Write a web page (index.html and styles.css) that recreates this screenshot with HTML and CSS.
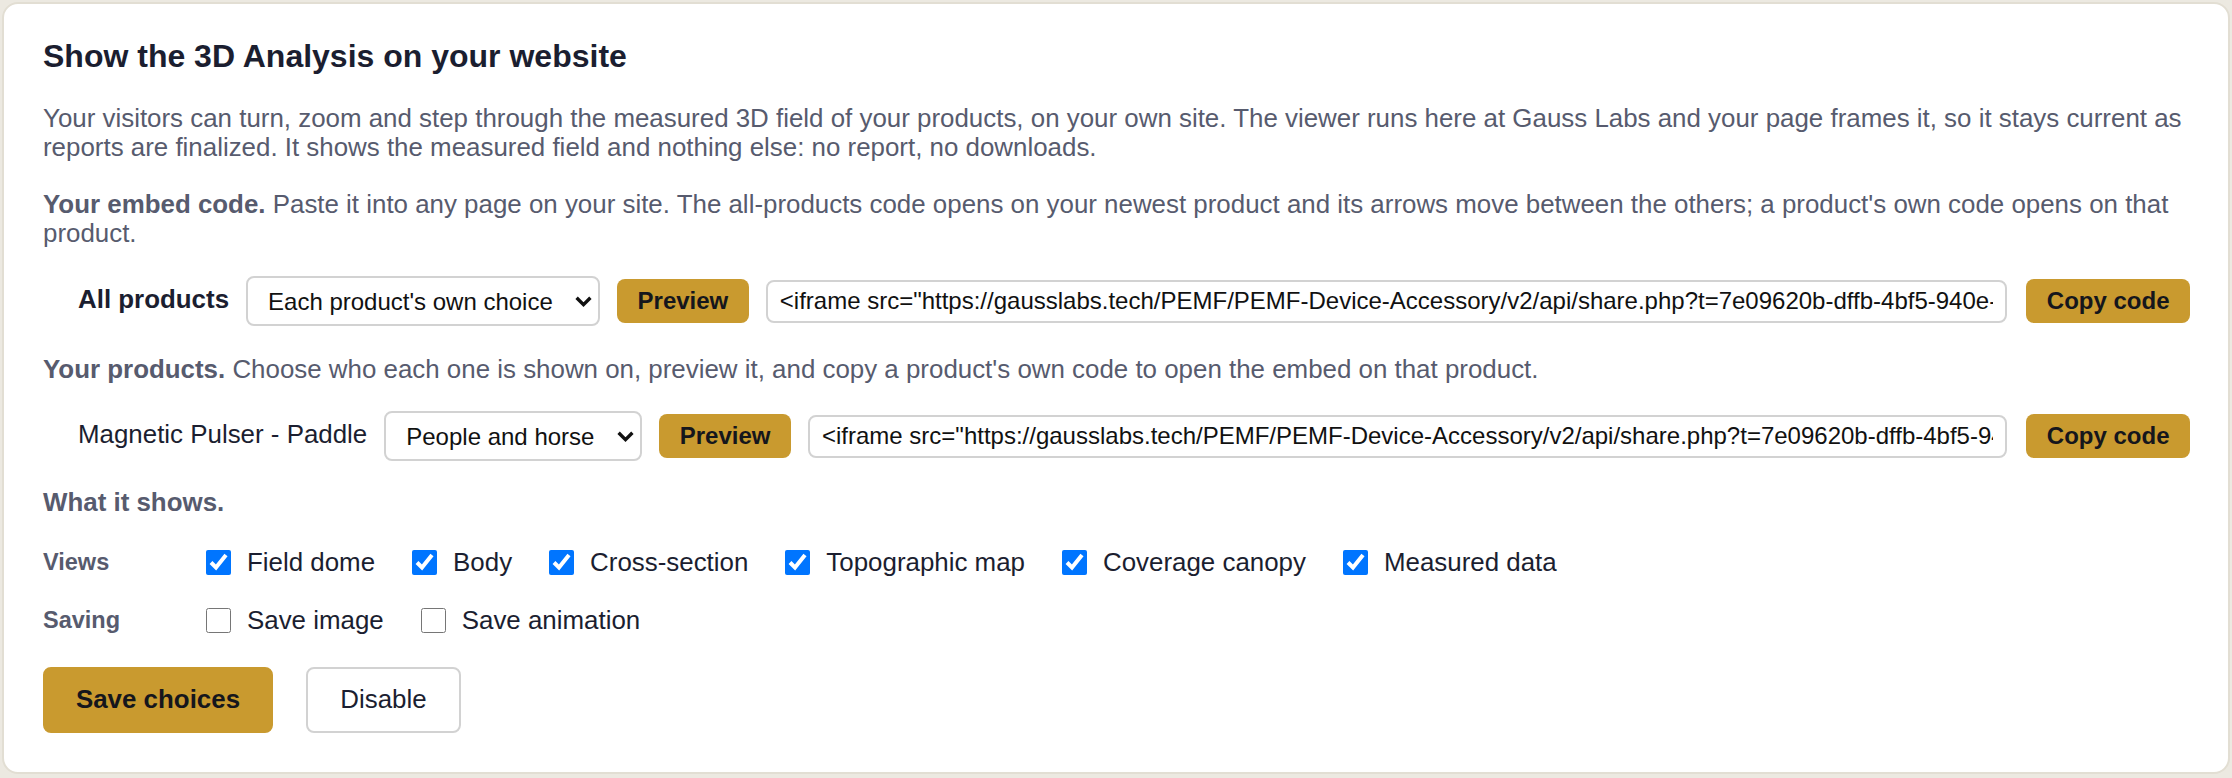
FILE: index.html
```html
<!DOCTYPE html>
<html lang="en">
<head>
<meta charset="utf-8">
<title>Show the 3D Analysis on your website</title>
<link rel="stylesheet" href="styles.css">
</head>
<body>
<section class="card">
  <h2 class="title">Show the 3D Analysis on your website</h2>
  <p class="text intro">Your visitors can turn, zoom and step through the measured 3D field of your products, on your own site. The viewer runs here at Gauss Labs and your page frames it, so it stays current as reports are finalized. It shows the measured field and nothing else: no report, no downloads.</p>
  <p class="text embed"><strong>Your embed code.</strong> Paste it into any page on your site. The all-products code opens on your newest product and its arrows move between the others; a product's own code opens on that product.</p>

  <div class="code-row first">
    <span class="row-label strong">All products</span>
    <span class="select-wrap">
      <select class="choice">
        <option>Each product's own choice</option>
        <option>People only</option>
        <option>People and horse</option>
      </select>
      <svg class="chev" width="17" height="11" viewBox="0 0 17 11" aria-hidden="true"><path d="M1.6 1.8 L8.5 8.6 L15.4 1.8" fill="none" stroke="#111111" stroke-width="3.4"/></svg>
    </span>
    <button class="btn gold small" type="button">Preview</button>
    <input class="code" type="text" readonly value='&lt;iframe src="https://gausslabs.tech/PEMF/PEMF-Device-Accessory/v2/api/share.php?t=7e09620b-dffb-4bf5-940e-3c1a8d5b2f47" width="100%" height="600" style="border:0"&gt;&lt;/iframe&gt;'>
    <button class="btn gold small" type="button">Copy code</button>
  </div>

  <p class="text products"><strong>Your products.</strong> Choose who each one is shown on, preview it, and copy a product's own code to open the embed on that product.</p>

  <div class="code-row second">
    <span class="row-label">Magnetic Pulser - Paddle</span>
    <span class="select-wrap">
      <select class="choice">
        <option>People and horse</option>
        <option>People only</option>
        <option>Horse only</option>
      </select>
      <svg class="chev" width="17" height="11" viewBox="0 0 17 11" aria-hidden="true"><path d="M1.6 1.8 L8.5 8.6 L15.4 1.8" fill="none" stroke="#111111" stroke-width="3.4"/></svg>
    </span>
    <button class="btn gold small" type="button">Preview</button>
    <input class="code" type="text" readonly value='&lt;iframe src="https://gausslabs.tech/PEMF/PEMF-Device-Accessory/v2/api/share.php?t=7e09620b-dffb-4bf5-940e-3c1a8d5b2f47&amp;p=magnetic-pulser-paddle" width="100%" height="600" style="border:0"&gt;&lt;/iframe&gt;'>
    <button class="btn gold small" type="button">Copy code</button>
  </div>

  <p class="text shows"><strong>What it shows.</strong></p>

  <div class="opt-row views">
    <span class="opt-label">Views</span>
    <div class="opt-items">
      <label class="opt"><input type="checkbox" checked><span>Field dome</span></label>
      <label class="opt"><input type="checkbox" checked><span>Body</span></label>
      <label class="opt"><input type="checkbox" checked><span>Cross-section</span></label>
      <label class="opt"><input type="checkbox" checked><span>Topographic map</span></label>
      <label class="opt"><input type="checkbox" checked><span>Coverage canopy</span></label>
      <label class="opt"><input type="checkbox" checked><span>Measured data</span></label>
    </div>
  </div>
  <div class="opt-row saving">
    <span class="opt-label">Saving</span>
    <div class="opt-items">
      <label class="opt"><input type="checkbox"><span>Save image</span></label>
      <label class="opt"><input type="checkbox"><span>Save animation</span></label>
    </div>
  </div>

  <div class="actions">
    <button class="btn gold big" type="button">Save choices</button>
    <button class="btn plain big" type="button">Disable</button>
  </div>
</section>
</body>
</html>
```

FILE: styles.css
```css
* {
  box-sizing: border-box;
}

html, body {
  margin: 0;
}

body {
  padding: 2px;
  background: #ece9e1;
  font-family: "Liberation Sans", Arial, sans-serif;
  font-size: 25.9px;
  line-height: 29.6px;
  color: #1b1e30;
}

.card {
  background: #ffffff;
  border: 2px solid #e2ded3;
  border-radius: 16px;
  padding: 33.5px 38px 39px 39px;
}

.title {
  margin: 0 0 29px;
  font-size: 32px;
  font-weight: bold;
  line-height: 37px;
  color: #1b1e30;
}

.text {
  margin: 0;
  font-size: 25.9px;
  line-height: 29.6px;
  color: #575b6e;
}

.text strong {
  font-weight: bold;
}

.intro {
  margin-bottom: 27px;
}

.embed {
  margin-bottom: 27.2px;
}

.products {
  margin-bottom: 26.5px;
}

.shows {
  margin-bottom: 30px;
}

.code-row {
  display: flex;
  align-items: center;
  gap: 17px;
  padding-left: 35px;
}

.code-row.first {
  margin-bottom: 28.5px;
}

.code-row.second {
  margin-bottom: 26.5px;
}

.row-label {
  flex: none;
  font-size: 25.9px;
  line-height: 29.6px;
  color: #1b1e30;
  margin-top: -3px;
}

.row-label.strong {
  font-weight: bold;
}

.select-wrap {
  position: relative;
  display: inline-flex;
  flex: none;
}

.choice {
  -webkit-appearance: none;
  appearance: none;
  font-family: "Liberation Sans", Arial, sans-serif;
  font-size: 24px;
  line-height: normal;
  color: #111111;
  background: #ffffff;
  border: 2px solid #d2d2d2;
  border-radius: 8px;
  padding: 9.7px 45px 9.7px 20px;
  margin: 0;
}

.chev {
  position: absolute;
  right: 8px;
  top: 50%;
  margin-top: -5px;
  pointer-events: none;
}

.code {
  flex: 1 1 auto;
  min-width: 0;
  margin: 0 2px 0 0;
  font-family: "Liberation Sans", Arial, sans-serif;
  font-size: 24px;
  line-height: normal;
  color: #111111;
  background: #ffffff;
  border: 2px solid #d2d2d2;
  border-radius: 8px;
  padding: 5.5px 12px;
}

.btn {
  font-family: "Liberation Sans", Arial, sans-serif;
  border-radius: 8px;
  cursor: pointer;
  flex: none;
  margin: 0;
}

.btn.gold {
  background: #c99a2f;
  border: 0;
  color: #15161c;
  font-weight: bold;
}

.btn.small {
  font-size: 24px;
  line-height: 27.6px;
  padding: 8px 20.5px;
}

.btn.big {
  font-size: 25.9px;
  line-height: 29.6px;
  padding: 16px 0;
  border: 2px solid #c99a2f;
}

.btn.gold.big {
  width: 230px;
}

.btn.plain {
  background: #ffffff;
  border: 2px solid #d2d2d2;
  color: #1b1e30;
  font-weight: normal;
  width: 155px;
}

.opt-row {
  display: flex;
  align-items: center;
}

.opt-row.views {
  margin-bottom: 28.5px;
}

.opt-label {
  flex: none;
  width: 163px;
  font-size: 23.5px;
  line-height: 27px;
  font-weight: bold;
  color: #575b6e;
}

.opt-items {
  display: flex;
  align-items: center;
  gap: 37px;
}

.opt {
  display: flex;
  align-items: center;
  gap: 16px;
  font-size: 25.9px;
  line-height: 29.6px;
  color: #1b1e30;
}

.opt input {
  margin: 0;
  width: 25px;
  height: 25px;
}

.actions {
  display: flex;
  gap: 33px;
  margin-top: 32px;
}
```
